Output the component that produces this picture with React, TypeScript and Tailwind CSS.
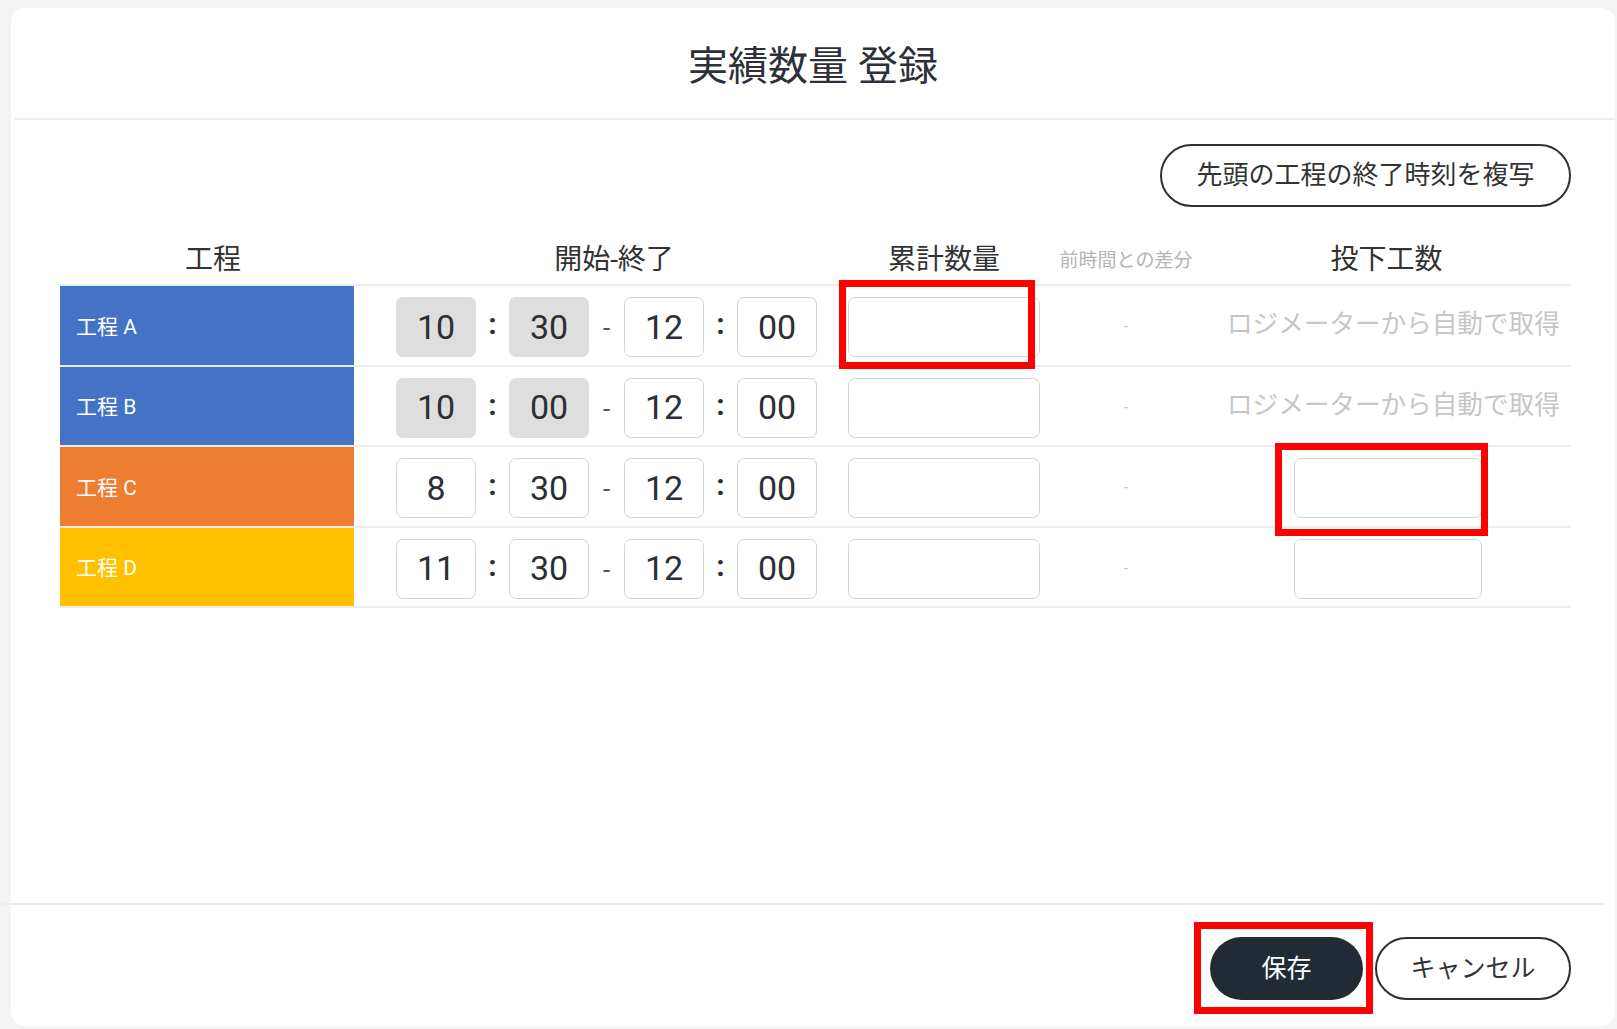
import React from "react";

type Row = {
  label: string;
  color: string;
  sh: string;
  sm: string;
  eh: string;
  em: string;
  locked: boolean;
  redQty: boolean;
  manHour: "auto" | "input" | "inputRed";
};

const rows: Row[] = [
  { label: "工程 A", color: "bg-[#4472c4]", sh: "10", sm: "30", eh: "12", em: "00", locked: true, redQty: true, manHour: "auto" },
  { label: "工程 B", color: "bg-[#4472c4]", sh: "10", sm: "00", eh: "12", em: "00", locked: true, redQty: false, manHour: "auto" },
  { label: "工程 C", color: "bg-[#ed7d31]", sh: "8", sm: "30", eh: "12", em: "00", locked: false, redQty: false, manHour: "inputRed" },
  { label: "工程 D", color: "bg-[#ffc000]", sh: "11", sm: "30", eh: "12", em: "00", locked: false, redQty: false, manHour: "input" },
];

function TimeBox({ v, locked }: { v: string; locked?: boolean }) {
  return (
    <div
      className={
        locked
          ? "w-[80px] h-[60px] rounded-[7px] bg-[#dedede] flex items-center justify-center text-[34px] text-[#2b2f36]"
          : "w-[80px] h-[60px] rounded-[7px] bg-white border-[1.5px] border-[#d3d3d3] flex items-center justify-center text-[34px] text-[#2b2f36]"
      }
    >
      {v}
    </div>
  );
}

function Colon() {
  return <div className="w-[33px] text-center text-[30px] font-bold text-[#2b2f36] leading-none pb-[6px]">:</div>;
}

function Dash() {
  return <div className="w-[35px] text-center text-[26px] text-[#555] leading-none pt-[2px]">-</div>;
}

function RedBox({ className }: { className: string }) {
  return <div className={"absolute border-[7px] border-[#ff0000] pointer-events-none " + className} />;
}

export default function App() {
  return (
    <div
      className="w-full h-screen bg-[#f4f4f4] pt-[8px] pl-[11px] pr-[2px] pb-[3px] overflow-hidden"
      style={{ fontFamily: "Roboto, 'Noto Sans CJK JP', 'Noto Sans', sans-serif" }}
    >
      <div className="w-full h-full bg-white rounded-[14px] flex flex-col">
        {/* Header */}
        <div className="h-[110px] flex items-center justify-center pt-[8px]">
          <h1 className="text-[40px] text-[#2d3038] leading-none">実績数量 登録</h1>
        </div>
        <div className="h-[2px] bg-[#ececec] ml-[4px]" />

        {/* Body */}
        <div className="flex-1 pl-[49px] pr-[44px]">
          <div className="flex justify-end mt-[24px]">
            <button className="w-[411px] h-[63px] rounded-full border-2 border-[#2d3139] text-[26px] text-[#333] bg-white flex items-center justify-center">
              先頭の工程の終了時刻を複写
            </button>
          </div>

          {/* Table header */}
          <div className="flex h-[52px] items-center mt-[25px] pt-[4px] text-[#333] text-[28px] leading-none">
            <div className="w-[294px] text-center pl-[12px]">工程</div>
            <div className="w-[478px] text-center pl-[42px]">開始-終了</div>
            <div className="w-[224px] text-center">累計数量</div>
            <div className="w-[140px] text-center text-[19px] text-[#b4b4b4]">前時間との差分</div>
            <div className="flex-1 text-center pl-[6px]">投下工数</div>
          </div>
          <div className="h-[2px] bg-[#ececec]" />

          {rows.map((r) => (
            <div key={r.label} className="flex h-[80.5px] border-b-[2px] border-[#ececec]">
              <div className={"w-[294px] h-full flex items-center pl-[16px] pt-[4px] text-white text-[21px] " + r.color}>
                {r.label}
              </div>
              <div className="w-[478px] flex items-center pl-[42px] pt-[4px]">
                <TimeBox v={r.sh} locked={r.locked} />
                <Colon />
                <TimeBox v={r.sm} locked={r.locked} />
                <Dash />
                <TimeBox v={r.eh} />
                <Colon />
                <TimeBox v={r.em} />
              </div>
              <div className="w-[224px] flex items-center pl-[16px] pt-[4px]">
                <div className="relative w-[192px] h-[60px] rounded-[7px] border-[1.5px] border-[#d3d3d3] bg-white">
                  {r.redQty && <RedBox className="-left-[10px] right-[4px] -top-[18px] -bottom-[13px]" />}
                </div>
              </div>
              <div className="w-[140px] flex items-center justify-center pt-[4px] text-[16px] text-[#c8c8c8]">-</div>
              <div className="flex-1 flex items-center pt-[4px]">
                {r.manHour === "auto" ? (
                  <div className="pl-[31px] text-[25.6px] text-[#c6c6c6] whitespace-nowrap leading-none pb-[4px]">
                    ロジメーターから自動で取得
                  </div>
                ) : (
                  <div className="ml-[98px] relative w-[188px] h-[60px] rounded-[7px] border-[1.5px] border-[#d3d3d3] bg-white">
                    {r.manHour === "inputRed" && <RedBox className="-left-[20px] -right-[7px] -top-[16px] -bottom-[19px]" />}
                  </div>
                )}
              </div>
            </div>
          ))}
        </div>

        {/* Footer */}
        <div className="h-[2px] bg-[#ececec] -ml-[8px] mr-[10px]" />
        <div className="h-[121px] flex justify-end items-start pt-[32px] pr-[44px] gap-[12px]">
          <div className="relative">
            <button className="w-[153px] h-[63px] rounded-full bg-[#222a35] text-white text-[25px] flex items-center justify-center">
              保存
            </button>
            <RedBox className="-left-[16px] -right-[10px] -top-[15px] -bottom-[14px]" />
          </div>
          <button className="w-[196px] h-[63px] rounded-full border-2 border-[#2a2f38] bg-white text-[#333] text-[25px] flex items-center justify-center">
            キャンセル
          </button>
        </div>
      </div>
    </div>
  );
}
